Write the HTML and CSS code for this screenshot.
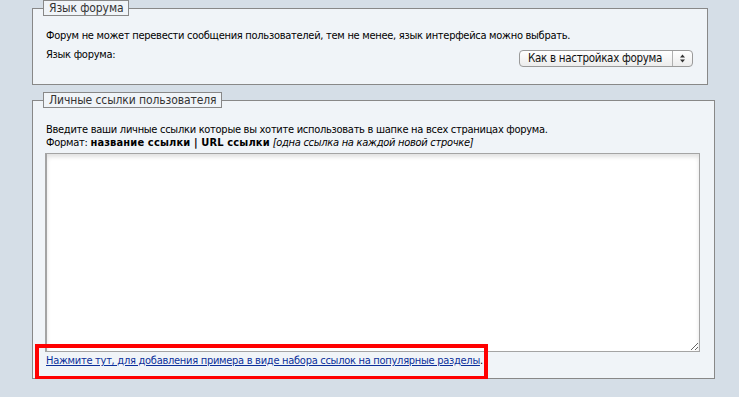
FILE: index.html
```html
<!DOCTYPE html>
<html lang="ru">
<head>
<meta charset="utf-8">
<title>Настройки</title>
<link rel="stylesheet" href="styles.css">
</head>
<body>
<div class="page">
  <fieldset class="box box-lang">
    <legend class="box-title">Язык форума</legend>
    <p class="note">Форум не может перевести сообщения пользователей, тем не менее, язык интерфейса можно выбрать.</p>
    <div class="row">
      <span class="label">Язык форума:</span>
      <div class="select">
        <span class="select-value">Как в настройках форума</span>
        <span class="select-arrows">
          <svg width="7" height="9" viewBox="0 0 7 9"><path d="M3.5 0.5 L6 3.5 H1 Z M3.5 8.5 L6 5.5 H1 Z" fill="#333"/></svg>
        </span>
      </div>
    </div>
  </fieldset>

  <fieldset class="box box-links">
    <legend class="box-title">Личные ссылки пользователя</legend>
    <p class="note note-links">Введите ваши личные ссылки которые вы хотите использовать в шапке на всех страницах форума.<br>Формат: <b class="strong">название ссылки | URL ссылки</b> <i>[одна ссылка на каждой новой строчке]</i></p>
    <textarea class="links-input"></textarea>
    <p class="hint"><a href="#" class="hint-link">Нажмите тут, для добавления примера в виде набора ссылок на популярные разделы</a>.<span class="highlight"></span></p>
  </fieldset>
</div>
</body>
</html>
```
FILE: styles.css
```css
html, body {
  margin: 0;
  padding: 0;
  background: #d5dee7;
}
body {
  font-family: "DejaVu Sans Condensed", "DejaVu Sans", sans-serif;
  font-stretch: condensed;
  font-size: 11px;
  letter-spacing: -0.28px;
  color: #000;
}
.page {
  padding: 0 0 0 32px;
}
.box {
  margin: 0;
  border: 1px solid #888;
  background: #f0f4f8;
  padding: 0 13px;
  box-sizing: border-box;
}
.box-lang {
  width: 676px;
  padding-bottom: 17px;
}
.box-links {
  width: 683px;
  margin-top: 7px;
  padding-bottom: 11px;
}
.box-title {
  margin-left: -3px;
  padding: 0 5px;
  height: 16px;
  line-height: 15px;
  box-sizing: border-box;
  border: 1px solid #888;
  background: #f0f4f8;
  font-size: 12px;
  letter-spacing: -0.1px;
  color: #333;
}
.note {
  margin: 13px 0 0;
  line-height: 13px;
}
.strong {
  letter-spacing: 0.15px;
}
.row {
  display: flex;
  justify-content: space-between;
  align-items: flex-start;
  margin-top: 5px;
}
.label {
  line-height: 13px;
  margin-top: 1px;
}
.select {
  display: flex;
  align-items: stretch;
  width: 174px;
  height: 17px;
  box-sizing: border-box;
  margin-top: 3px;
  margin-right: 1px;
  border: 1px solid #9a9a9a;
  border-radius: 4px;
  background: linear-gradient(#ffffff, #ececec);
  font-size: 11.5px;
  letter-spacing: -0.3px;
  color: #111;
  white-space: nowrap;
}
.select-value {
  flex: 1;
  padding-left: 8px;
  line-height: 15px;
  overflow: hidden;
}
.select-arrows {
  width: 19px;
  flex: none;
  border-left: 1px solid #b0b0b0;
  display: flex;
  align-items: center;
  justify-content: center;
}
.note-links {
  margin-top: 15px;
}
.links-input {
  display: block;
  width: 655px;
  height: 199px;
  box-sizing: border-box;
  margin: 4px 0 0 -1px;
  border: 1px solid #a4a4a4;
  border-left-width: 2px;
  background: #fff;
  box-shadow: inset 0 3px 4px rgba(0, 0, 0, 0.12);
  resize: both;
}
.hint {
  position: relative;
  margin: 2px 0 0;
  line-height: 13px;
}
.hint-link {
  color: #0b2f9a;
  text-decoration: underline;
}
.highlight {
  position: absolute;
  left: -11px;
  top: -10px;
  width: 453px;
  height: 36px;
  box-sizing: border-box;
  border: 4px solid #ff0000;
  pointer-events: none;
}
```
